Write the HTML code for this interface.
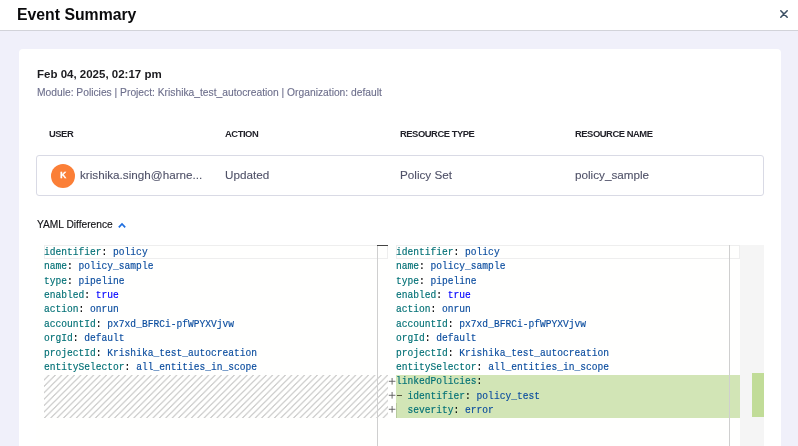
<!DOCTYPE html>
<html><head><meta charset="utf-8">
<style>
*{box-sizing:border-box;margin:0;padding:0}
html,body{width:798px;height:446px;overflow:hidden;background:#fff;font-family:"Liberation Sans",sans-serif}
div,svg{position:absolute}
.title,.date,.mod,.th,.td,.yd,.av{will-change:transform}
.hdr{left:0;top:0;width:798px;height:31px;background:#fff;border-bottom:1px solid #d2d3d9}
.title{left:17px;top:6px;font-size:15.8px;font-weight:bold;color:#0b0b0d;white-space:nowrap}
.close{left:778px;top:7px;width:12px;height:14px}
.bg{left:0;top:31px;width:798px;height:415px;background:#f0f0fa}
.card{left:19px;top:48.5px;width:762px;height:420px;background:#fff;border-radius:4px}
.date{left:37px;top:68px;font-size:11.5px;font-weight:bold;color:#1b1b1f;white-space:nowrap}
.mod{left:37px;top:86.7px;font-size:10.27px;color:#6d6f8c;-webkit-text-stroke:0.12px currentColor;white-space:nowrap}
.th{top:128.4px;font-size:9.4px;letter-spacing:-0.45px;font-weight:bold;color:#22222a;white-space:nowrap}
.row{left:36px;top:155px;width:728px;height:41px;border:1px solid #d9dae5;border-radius:3px}
.av{left:51px;top:163.5px;width:24px;height:24px;border-radius:50%;background:#fb7f37;color:#fff;font-size:8.2px;font-weight:bold;text-align:center;line-height:24px;padding-left:0.5px;-webkit-text-stroke:0.35px #fff}
.td{top:168px;font-size:11.7px;color:#4f5168;-webkit-text-stroke:0.1px currentColor;white-space:nowrap}
.yd{left:37px;top:218.7px;font-size:10.2px;color:#141418;-webkit-text-stroke:0.15px currentColor;white-space:nowrap}
.edbg{left:36px;top:245px;width:728px;height:201px;background:#fffffe}
.ln{will-change:transform;transform:scaleY(1.08);transform-origin:0 9.4px;-webkit-text-stroke:0.15px currentColor;font-family:"Liberation Mono",monospace;font-size:9.6px;line-height:14.4px;height:14.4px;white-space:pre}
.k{color:#007075}.v{color:#0a4c9e}.t{color:#0000ff}.p{color:#000}
.curl{height:14.4px;border:1px solid #eeeeee}
.vline{width:1px;background:#cfcfcf}
.hatch{background-image:linear-gradient(-45deg, rgba(34,34,34,.22) 16%, transparent 16%, transparent 50%, rgba(34,34,34,.22) 50%, rgba(34,34,34,.22) 66%, transparent 66%, transparent 100%);background-size:6.4px 6.4px}
.ins{background:#d2e5b6}
</style></head><body>
<div class="hdr"><div class="title">Event Summary</div>
<svg class="close" viewBox="0 0 12 14"><path d="M2.8 3.8 L9.2 10.2 M9.2 3.8 L2.8 10.2" stroke="#3b4f63" stroke-width="1.55" stroke-linecap="round"/></svg>
</div>
<div class="bg"></div>
<div class="card"></div>
<div class="date">Feb 04, 2025, 02:17 pm</div>
<div class="mod">Module: Policies | Project: Krishika_test_autocreation | Organization: default</div>
<div class="th" style="left:49px">USER</div>
<div class="th" style="left:225px">ACTION</div>
<div class="th" style="left:400px">RESOURCE TYPE</div>
<div class="th" style="left:575px">RESOURCE NAME</div>
<div class="row"></div>
<div class="av">K</div>
<div class="td" style="left:80px">krishika.singh@harne...</div>
<div class="td" style="left:225px">Updated</div>
<div class="td" style="left:400px">Policy Set</div>
<div class="td" style="left:575px">policy_sample</div>
<div class="yd">YAML Difference</div>
<svg style="left:117px;top:222px" width="10" height="7" viewBox="0 0 10 7"><path d="M1.8 5.3 L5 2 L8.2 5.3" stroke="#1f6fe0" stroke-width="1.7" fill="none"/></svg>

<div class="edbg"></div>
<div class="hatch" style="left:44px;top:374.6px;width:344px;height:43.2px"></div>
<div class="ins" style="left:396px;top:374.6px;width:344px;height:43.2px"></div>
<div class="curl" style="left:44px;top:245px;width:344px"></div>
<div class="curl" style="left:396px;top:245px;width:344px"></div>
<div class="vline" style="left:377px;top:245px;height:201px"></div>
<div style="left:377px;top:245px;width:11px;height:1.3px;background:#444"></div>
<div class="vline" style="left:729px;top:245px;height:201px"></div>
<div style="left:740px;top:245px;width:24px;height:201px;background:#f5f5f5"></div>
<div style="left:752px;top:373px;width:12px;height:44px;background:#c1dc98"></div>
<div class="ln" style="left:44px;top:245.80px"><span class="k">identifier</span><span class="p">: </span><span class="v">policy</span></div>
<div class="ln" style="left:44px;top:260.20px"><span class="k">name</span><span class="p">: </span><span class="v">policy_sample</span></div>
<div class="ln" style="left:44px;top:274.60px"><span class="k">type</span><span class="p">: </span><span class="v">pipeline</span></div>
<div class="ln" style="left:44px;top:289.00px"><span class="k">enabled</span><span class="p">: </span><span class="t">true</span></div>
<div class="ln" style="left:44px;top:303.40px"><span class="k">action</span><span class="p">: </span><span class="v">onrun</span></div>
<div class="ln" style="left:44px;top:317.80px"><span class="k">accountId</span><span class="p">: </span><span class="v">px7xd_BFRCi-pfWPYXVjvw</span></div>
<div class="ln" style="left:44px;top:332.20px"><span class="k">orgId</span><span class="p">: </span><span class="v">default</span></div>
<div class="ln" style="left:44px;top:346.60px"><span class="k">projectId</span><span class="p">: </span><span class="v">Krishika_test_autocreation</span></div>
<div class="ln" style="left:44px;top:361.00px"><span class="k">entitySelector</span><span class="p">: </span><span class="v">all_entities_in_scope</span></div>
<div class="ln" style="left:396px;top:245.80px"><span class="k">identifier</span><span class="p">: </span><span class="v">policy</span></div>
<div class="ln" style="left:396px;top:260.20px"><span class="k">name</span><span class="p">: </span><span class="v">policy_sample</span></div>
<div class="ln" style="left:396px;top:274.60px"><span class="k">type</span><span class="p">: </span><span class="v">pipeline</span></div>
<div class="ln" style="left:396px;top:289.00px"><span class="k">enabled</span><span class="p">: </span><span class="t">true</span></div>
<div class="ln" style="left:396px;top:303.40px"><span class="k">action</span><span class="p">: </span><span class="v">onrun</span></div>
<div class="ln" style="left:396px;top:317.80px"><span class="k">accountId</span><span class="p">: </span><span class="v">px7xd_BFRCi-pfWPYXVjvw</span></div>
<div class="ln" style="left:396px;top:332.20px"><span class="k">orgId</span><span class="p">: </span><span class="v">default</span></div>
<div class="ln" style="left:396px;top:346.60px"><span class="k">projectId</span><span class="p">: </span><span class="v">Krishika_test_autocreation</span></div>
<div class="ln" style="left:396px;top:361.00px"><span class="k">entitySelector</span><span class="p">: </span><span class="v">all_entities_in_scope</span></div>
<div class="ln" style="left:396px;top:375.40px"><span class="k">linkedPolicies</span><span class="p">:</span></div>
<div class="ln" style="left:396px;top:389.80px"><span class="p">  </span><span class="k">identifier</span><span class="p">: </span><span class="v">policy_test</span></div>
<div class="ln" style="left:396px;top:404.20px"><span class="p">  </span><span class="k">severity</span><span class="p">: </span><span class="v">error</span></div>
<svg class="plus" style="left:388px;top:374.60px" width="8" height="14.4" viewBox="0 0 8 14.4"><path d="M0.8 6.3H7.4M4.1 3.0V9.6" stroke="#555" stroke-width="0.85"/></svg>
<svg class="plus" style="left:388px;top:389.00px" width="8" height="14.4" viewBox="0 0 8 14.4"><path d="M0.8 6.3H7.4M4.1 3.0V9.6" stroke="#555" stroke-width="0.85"/></svg>
<svg class="plus" style="left:388px;top:403.40px" width="8" height="14.4" viewBox="0 0 8 14.4"><path d="M0.8 6.3H7.4M4.1 3.0V9.6" stroke="#555" stroke-width="0.85"/></svg>
<div style="left:396.5px;top:394.9px;width:5px;height:1.6px;background:#585a3c"></div>
<div style="left:396px;top:403.4px;width:1px;height:14.4px;background:rgba(60,80,40,.18)"></div>
</body></html>
